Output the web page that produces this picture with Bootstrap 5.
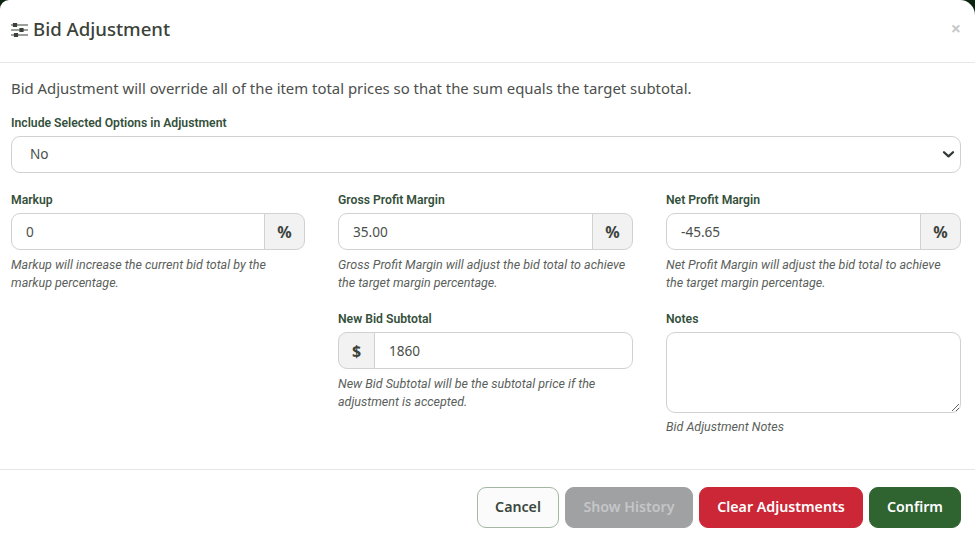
<!DOCTYPE html>
<html lang="en">
<head>
<meta charset="utf-8">
<title>Bid Adjustment</title>
<link href="https://cdn.jsdelivr.net/npm/bootstrap@5.3.0/dist/css/bootstrap.min.css" rel="stylesheet">
<style>
html,body{height:540px;overflow:hidden;background:#0b2410;}
body{font-family:"Noto Sans","Roboto",sans-serif;color:#3f4a42;}
.sheet{height:540px;background:#fff;border-radius:9px 15px 0 0;display:flex;flex-direction:column;}
.sheet-head{height:63px;border-bottom:1px solid #e6e6e6;padding:0 11px 0 10px;display:flex;align-items:center;justify-content:space-between;}
.sheet-title{font-size:18.6px;font-weight:500;color:#3a4239;margin:0 0 3px;display:flex;align-items:center;gap:4px;line-height:1.2;}
.x-mark{color:#c9c9c9;font-size:18px;font-weight:700;line-height:1;margin-right:3px;margin-bottom:6px;}
.sheet-body{flex:1 1 auto;padding:16px 14px 0 11px;}
.intro{font-size:14.9px;color:#4c4f4d;margin:0 0 17px;line-height:19px;}
.lbl{display:block;font-family:"Roboto",sans-serif;font-size:12.2px;font-weight:600;color:#34503a;line-height:16px;margin:0 0 5px;}
.sel-wrap{margin-bottom:19px;}
.form-select.fld,.form-control.fld{height:37px;font-size:13.6px;color:#4a4f4b;border:1px solid #cfd2cf;border-radius:9px;padding:0 18px;}
.form-select.fld{background-image:url("data:image/svg+xml,%3csvg xmlns='http://www.w3.org/2000/svg' viewBox='0 0 14 10'%3e%3cpath fill='none' stroke='%23333a35' stroke-width='2.6' stroke-linecap='round' stroke-linejoin='round' d='M2 2.5l5 4.5 5-4.5'/%3e%3c/svg%3e");background-size:13px 9px;background-position:right 5px center;}
.input-group-text.add{font-size:16px;font-weight:700;color:#3a423c;background:#f2f2f2;border:1px solid #cfd2cf;border-radius:9px;height:37px;justify-content:center;}
.add-r{width:41px;}
.add-l{width:37px;}
.input-group .form-control.fld{padding:0 14px;}
.input-group .fld-end{border-radius:0 9px 9px 0;}
.note-txt{font-family:"Roboto",sans-serif;font-size:12.5px;font-style:italic;color:#5b5f5c;line-height:18px;margin:6px 0 0;padding-right:4px;}
.note-gap{margin-top:5px;}
.cols{display:grid;grid-template-columns:294px 295px 295px;column-gap:33px;}
.cell-a{padding-bottom:19px;}
textarea.form-control.area{height:81px;border:1px solid #cfd2cf;border-radius:9px;}
.sheet-foot{border-top:1px solid #e6e6e6;height:71px;padding:17px 14px 0 11px;display:flex;justify-content:flex-end;align-items:flex-start;gap:6px;}
.btn.act{height:41px;font-size:14.2px;font-weight:600;border-radius:9px;padding:0 0 2px;display:flex;align-items:center;justify-content:center;}
.btn.act-cancel{width:82px;background:#fbfbfb;color:#3a473d;border:1px solid #a3b7a3;}
.btn.act-hist:disabled{width:128px;background:#a0a1a3;color:#c5c6c8;border:1px solid #a0a1a3;opacity:1;}
.btn.act-clear{width:164px;background:#cb2737;color:#fff;border:1px solid #cb2737;}
.btn.act-ok{width:92px;background:#2f6330;color:#fff;border:1px solid #2f6330;}
</style>
</head>
<body>
<div class="sheet">
  <div class="sheet-head">
    <h5 class="sheet-title">
      <svg width="19" height="16" viewBox="0 0 19 16" aria-hidden="true" fill="none" stroke="#3a4239" stroke-width="1.2"><path d="M1 3h17M1 8h17M1 13h17"/><rect x="3.5" y="1.6" width="3" height="2.8" fill="#3a4239"/><rect x="10" y="6.6" width="3" height="2.8" fill="#3a4239"/><rect x="4.5" y="11.6" width="3" height="2.8" fill="#3a4239"/></svg>
      <span>Bid Adjustment</span>
    </h5>
    <span class="x-mark">×</span>
  </div>
  <div class="sheet-body">
    <p class="intro">Bid Adjustment will override all of the item total prices so that the sum equals the target subtotal.</p>
    <div class="sel-wrap">
      <label class="lbl">Include Selected Options in Adjustment</label>
      <select class="form-select fld"><option>No</option></select>
    </div>
    <div class="cols">
      <div class="cell-a">
        <label class="lbl">Markup</label>
        <div class="input-group">
          <input class="form-control fld" value="0">
          <span class="input-group-text add add-r">%</span>
        </div>
        <p class="note-txt">Markup will increase the current bid total by the markup percentage.</p>
      </div>
      <div class="cell-a">
        <label class="lbl">Gross Profit Margin</label>
        <div class="input-group">
          <input class="form-control fld" value="35.00">
          <span class="input-group-text add add-r">%</span>
        </div>
        <p class="note-txt">Gross Profit Margin will adjust the bid total to achieve the target margin percentage.</p>
      </div>
      <div class="cell-a">
        <label class="lbl">Net Profit Margin</label>
        <div class="input-group">
          <input class="form-control fld" value="-45.65">
          <span class="input-group-text add add-r">%</span>
        </div>
        <p class="note-txt">Net Profit Margin will adjust the bid total to achieve the target margin percentage.</p>
      </div>
      <div></div>
      <div>
        <label class="lbl">New Bid Subtotal</label>
        <div class="input-group">
          <span class="input-group-text add add-l">$</span>
          <input class="form-control fld fld-end" value="1860">
        </div>
        <p class="note-txt">New Bid Subtotal will be the subtotal price if the adjustment is accepted.</p>
      </div>
      <div>
        <label class="lbl">Notes</label>
        <textarea class="form-control area"></textarea>
        <p class="note-txt note-gap">Bid Adjustment Notes</p>
      </div>
    </div>
  </div>
  <div class="sheet-foot">
    <button class="btn act act-cancel">Cancel</button>
    <button class="btn act act-hist" disabled>Show History</button>
    <button class="btn act act-clear">Clear Adjustments</button>
    <button class="btn act act-ok">Confirm</button>
  </div>
</div>
<script src="https://cdn.jsdelivr.net/npm/bootstrap@5.3.0/dist/js/bootstrap.bundle.min.js"></script>
</body>
</html>
